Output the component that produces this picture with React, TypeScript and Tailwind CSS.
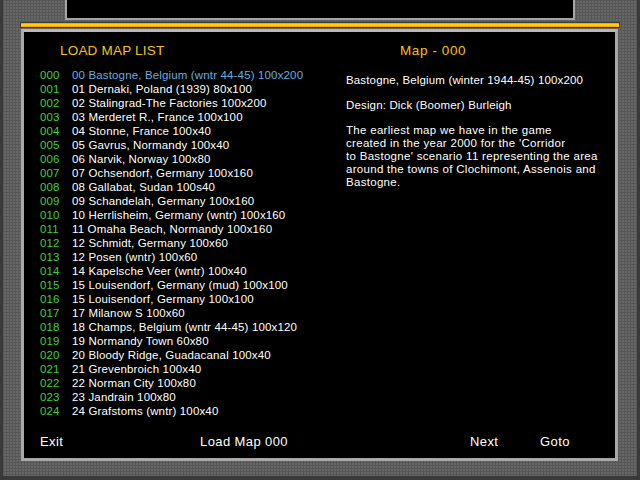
import React from 'react';

const maps: [string, string][] = [
  ['000', '00 Bastogne, Belgium (wntr 44-45) 100x200'],
  ['001', '01 Dernaki, Poland (1939) 80x100'],
  ['002', '02 Stalingrad-The Factories 100x200'],
  ['003', '03 Merderet R., France 100x100'],
  ['004', '04 Stonne, France 100x40'],
  ['005', '05 Gavrus, Normandy 100x40'],
  ['006', '06 Narvik, Norway 100x80'],
  ['007', '07 Ochsendorf, Germany 100x160'],
  ['008', '08 Gallabat, Sudan 100s40'],
  ['009', '09 Schandelah, Germany 100x160'],
  ['010', '10 Herrlisheim, Germany (wntr) 100x160'],
  ['011', '11 Omaha Beach, Normandy 100x160'],
  ['012', '12 Schmidt, Germany 100x60'],
  ['013', '12 Posen (wntr) 100x60'],
  ['014', '14 Kapelsche Veer (wntr) 100x40'],
  ['015', '15 Louisendorf, Germany (mud) 100x100'],
  ['016', '15 Louisendorf, Germany 100x100'],
  ['017', '17 Milanow S 100x60'],
  ['018', '18 Champs, Belgium (wntr 44-45) 100x120'],
  ['019', '19 Normandy Town 60x80'],
  ['020', '20 Bloody Ridge, Guadacanal 100x40'],
  ['021', '21 Grevenbroich 100x40'],
  ['022', '22 Norman City 100x80'],
  ['023', '23 Jandrain 100x80'],
  ['024', '24 Grafstoms (wntr) 100x40'],
];

const blurb = [
  'The earliest map we have in the game',
  "created in the year 2000 for the 'Corridor",
  "to Bastogne' scenario 11 representing the area",
  'around the towns of Clochimont, Assenois and',
  'Bastogne.',
];

const metal =
  'bg-[#676767] bg-[linear-gradient(#575757_1px,transparent_1px),linear-gradient(90deg,#575757_1px,transparent_1px)] bg-[size:3px_3px]';

export default function App() {
  return (
    <div
      className={`w-[640px] h-[480px] overflow-hidden flex flex-col border-l-[3px] border-r-[3px] border-b-[4px] border-[#3a3a3a] ${metal}`}
      style={{ fontFamily: '"Liberation Sans", Arial, sans-serif' }}
    >
      {/* top slot */}
      <div className="ml-[62px] w-[510px] h-[20px] shrink-0 bg-black border-x-2 border-b-2 border-[#a4a4a4]" />

      {/* orange rail */}
      <div className="mt-[2px] ml-[17px] w-[600px] h-[6px] shrink-0 border border-[#3c3c3c] bg-[linear-gradient(#ff8a00,#ffd200_35%,#ffd200_65%,#ff8a00)]" />

      {/* main panel */}
      <div className="mt-[1px] ml-[18px] w-[597px] h-[432px] shrink-0 border-[3px] border-[#a8a8a8] border-t-[#b8b8b8] bg-black flex flex-col text-white text-[11.5px] tracking-[0.15px]">
        <div className="flex">
          {/* list column */}
          <div className="w-[322px] pt-[11px]">
            <div className="pl-[36px] h-[16px] leading-[16px] text-[13.5px] text-[#f8c010] tracking-[0.2px]">LOAD MAP LIST</div>
            <div className="mt-[9px] pl-[16px] flex flex-col">
              {maps.map(([code, name], i) => (
                <div key={code} className="flex h-[14px] leading-[14px]">
                  <span className="w-[32px] text-[#3cd03c]">{code}</span>
                  <span className={i === 0 ? 'text-[#62aee0]' : 'text-white'}>{name}</span>
                </div>
              ))}
            </div>
          </div>

          {/* detail column */}
          <div className="flex-1 pt-[11px]">
            <div className="pl-[54px] h-[16px] leading-[16px] text-[13.5px] text-[#f8c010] tracking-[0.6px]">Map - 000</div>
            <div className="mt-[14px] h-[14px] leading-[14px]">Bastogne, Belgium (winter 1944-45) 100x200</div>
            <div className="mt-[11px] h-[14px] leading-[14px]">Design: Dick (Boomer) Burleigh</div>
            <div className="mt-[12px] flex flex-col">
              {blurb.map((l) => (
                <div key={l} className="h-[13px] leading-[13px] tracking-[0.3px]">{l}</div>
              ))}
            </div>
          </div>
        </div>

        {/* footer commands */}
        <div className="mt-auto mb-[8px] pl-[16px] flex h-[16px] leading-[16px] text-[13px] tracking-[0.4px]">
          <span className="w-[160px]">Exit</span>
          <span className="w-[270px]">Load Map 000</span>
          <span className="w-[70px]">Next</span>
          <span>Goto</span>
        </div>
      </div>
    </div>
  );
}
